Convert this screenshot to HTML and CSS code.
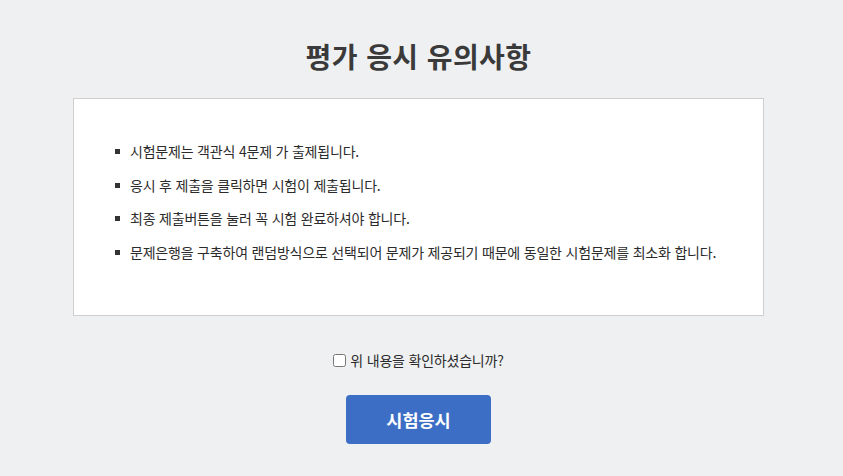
FILE: index.html
```html
<!DOCTYPE html>
<html lang="ko">
<head>
<meta charset="utf-8">
<link rel="stylesheet" href="styles.css">
</head>
<body>
<div class="page">
  <h1 class="title">평가 응시 유의사항</h1>
  <div class="notice">
    <ul class="rules">
      <li>시험문제는 객관식 4문제 가 출제됩니다.</li>
      <li>응시 후 제출을 클릭하면 시험이 제출됩니다.</li>
      <li>최종 제출버튼을 눌러 꼭 시험 완료하셔야 합니다.</li>
      <li>문제은행을 구축하여 랜덤방식으로 선택되어 문제가 제공되기 때문에 동일한 시험문제를 최소화 합니다.</li>
    </ul>
  </div>
  <label class="confirm"><input type="checkbox" class="check">위 내용을 확인하셨습니까?</label>
  <button class="start">시험응시</button>
</div>
</body>
</html>
```
FILE: styles.css
```css
html, body {
  margin: 0;
  padding: 0;
  background: #eff0f2;
}
body {
  font-family: "Noto Sans CJK KR", "Noto Sans", sans-serif;
  color: #333;
}
.page {
  width: 837px;
  display: flex;
  flex-direction: column;
  align-items: center;
}
.title {
  margin: 36px 0 0;
  font-size: 28px;
  line-height: 40px;
  font-weight: 700;
  color: #3a3a3a;
  letter-spacing: 0.4px;
}
.notice {
  box-sizing: border-box;
  width: 691px;
  height: 218px;
  margin-top: 22px;
  background: #fff;
  border: 1px solid #cfcfcf;
  padding: 41px 0 0 0;
}
.rules {
  margin: 0;
  padding: 0 0 0 56px;
  list-style: none;
  font-size: 14px;
  line-height: 22px;
  color: #2b2b2b;
  letter-spacing: -0.2px;
}
.rules li {
  position: relative;
  margin-bottom: 11.5px;
}
.rules li::before {
  content: "";
  position: absolute;
  left: -15px;
  top: 9px;
  width: 5px;
  height: 5px;
  background: #333;
}
.confirm {
  margin-top: 34px;
  font-size: 14px;
  line-height: 20px;
  display: flex;
  align-items: center;
  letter-spacing: -0.2px;
  color: #2b2b2b;
}
.check {
  width: 13px;
  height: 13px;
  margin: 0 4px 0 0;
}
.start {
  margin-top: 25px;
  width: 145px;
  height: 49px;
  border: 0;
  border-radius: 4px;
  background: #3d6ec5;
  color: #fff;
  font-family: "Noto Sans CJK KR", sans-serif;
  font-size: 17.5px;
  font-weight: 700;
  letter-spacing: 0;
}
```
